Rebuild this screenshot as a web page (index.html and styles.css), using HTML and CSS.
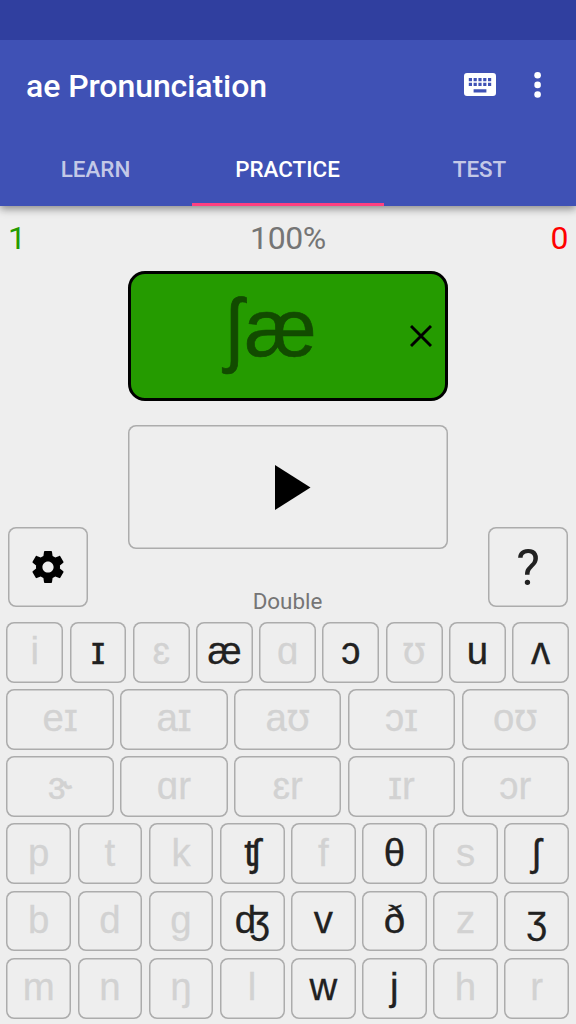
FILE: index.html
```html
<!DOCTYPE html>
<html lang="en">
<head>
<meta charset="utf-8">
<title>ae Pronunciation</title>
<link rel="stylesheet" href="styles.css">
</head>
<body>
<div class="app">
  <header class="header">
    <div class="status-bar"></div>
    <div class="toolbar">
      <h1 class="title">ae Pronunciation</h1>
      <svg class="icon-keyboard" viewBox="0 0 32 23"><path fill="#fff" fill-rule="evenodd" d="M3 0H29Q32 0 32 3V20Q32 23 29 23H3Q0 23 0 20V3Q0 0 3 0ZM4.8 5V8.2H8V5ZM9.6 5V8.2H12.8V5ZM14.4 5V8.2H17.6V5ZM19.2 5V8.2H22.4V5ZM24 5V8.2H27.2V5ZM4.8 9.8V13H8V9.8ZM9.6 9.8V13H12.8V9.8ZM14.4 9.8V13H17.6V9.8ZM19.2 9.8V13H22.4V9.8ZM24 9.8V13H27.2V9.8ZM9.6 16.2V19.4H22.4V16.2Z"/></svg>
      <svg class="icon-more" viewBox="0 0 8 26"><g fill="#fff"><circle cx="3.6" cy="3.3" r="3.3"/><circle cx="3.6" cy="12.9" r="3.3"/><circle cx="3.6" cy="22.5" r="3.3"/></g></svg>
    </div>
    <nav class="tabs">
      <div class="tab">LEARN</div>
      <div class="tab tab-active">PRACTICE</div>
      <div class="tab">TEST</div>
    </nav>
  </header>
  <main class="main">
    <div class="score"><span class="right-count">1</span><span>100%</span><span class="wrong-count">0</span></div>
    <div class="answer">
      <span class="answer-text"><span class="esh">ʃ</span>æ</span>
      <svg class="icon-clear" viewBox="0 0 22 22"><path d="M1 1L21 21M21 1L1 21" stroke="#000" stroke-width="2.9"/></svg>
    </div>
    <div class="controls">
      <div class="box square"><svg class="icon-gear" viewBox="2 2 20 20"><path d="M19.43 12.98c.04-.32.07-.64.07-.98s-.03-.66-.07-.98l2.11-1.65c.19-.15.24-.42.12-.64l-2-3.46c-.12-.22-.39-.3-.61-.22l-2.49 1c-.52-.4-1.08-.73-1.69-.98l-.38-2.65C14.46 2.18 14.25 2 14 2h-4c-.25 0-.46.18-.49.42l-.38 2.65c-.61.25-1.17.59-1.69.98l-2.49-1c-.23-.09-.49 0-.61.22l-2 3.46c-.13.22-.07.49.12.64l2.11 1.65c-.04.32-.07.65-.07.98s.03.66.07.98l-2.11 1.65c-.19.15-.24.42-.12.64l2 3.46c.12.22.39.3.61.22l2.49-1c.52.4 1.08.73 1.69.98l.38 2.65c.03.24.24.42.49.42h4c.25 0 .46-.18.49-.42l.38-2.65c.61-.25 1.17-.59 1.69-.98l2.49 1c.23.09.49 0 .61-.22l2-3.46c.12-.22.07-.49-.12-.64l-2.11-1.65zM12 15.5c-1.93 0-3.5-1.57-3.5-3.5s1.57-3.5 3.5-3.5 3.5 1.57 3.5 3.5-1.57 3.5-3.5 3.5z"/></svg></div>
      <div class="center">
        <div class="box play"><svg class="icon-play" viewBox="0 0 36 45"><path d="M0 0L35.5 22.5L0 45Z"/></svg></div>
        <div class="mode">Double</div>
      </div>
      <div class="box square help">?</div>
    </div>
    <div class="keyboard">
      <div class="row"><div class="box key off">i</div><div class="box key">ɪ</div><div class="box key off">ɛ</div><div class="box key">æ</div><div class="box key off">ɑ</div><div class="box key">ɔ</div><div class="box key off"><span class="alt">ʊ</span></div><div class="box key">u</div><div class="box key">ʌ</div></div>
      <div class="row"><div class="box key off">eɪ</div><div class="box key off">aɪ</div><div class="box key off">a<span class="alt">ʊ</span></div><div class="box key off">ɔɪ</div><div class="box key off">o<span class="alt">ʊ</span></div></div>
      <div class="row"><div class="box key off">ɝ</div><div class="box key off">ɑr</div><div class="box key off">ɛr</div><div class="box key off">ɪr</div><div class="box key off">ɔr</div></div>
      <div class="row"><div class="box key off">p</div><div class="box key off">t</div><div class="box key off">k</div><div class="box key">ʧ</div><div class="box key off">f</div><div class="box key">θ</div><div class="box key off">s</div><div class="box key">ʃ</div></div>
      <div class="row"><div class="box key off">b</div><div class="box key off">d</div><div class="box key off">g</div><div class="box key">ʤ</div><div class="box key">v</div><div class="box key">ð</div><div class="box key off">z</div><div class="box key">ʒ</div></div>
      <div class="row"><div class="box key off">m</div><div class="box key off">n</div><div class="box key off">ŋ</div><div class="box key off">l</div><div class="box key">w</div><div class="box key">j</div><div class="box key off">h</div><div class="box key off">r</div></div>
    </div>
  </main>
</div>
</body>
</html>
```

FILE: styles.css
```css
* { box-sizing: border-box; }
body { margin: 0; background: #eee; font-family: Roboto, sans-serif; }
svg { display: block; }
.app { width: 576px; height: 1024px; overflow: hidden; }
.header { height: 206px; background: #3f51b5; box-shadow: 0 3px 8px rgba(0,0,0,.42); }
.status-bar { height: 40px; background: #303f9f; }
.toolbar { height: 90px; padding: 0 34px 1px 26px; display: flex; align-items: center; }
.title { margin: 2px 0 0; flex: 1; color: #fff; font-size: 32px; font-weight: 500; letter-spacing: -.07px; white-space: nowrap; }
.icon-keyboard { width: 32px; height: 23px; margin-right: 38px; }
.icon-more { width: 8px; height: 26px; }
.tabs { height: 76px; display: grid; grid-template-columns: repeat(3, 1fr); }
.tab { display: flex; align-items: center; justify-content: center; padding: 5px 1px 0 0; border-bottom: 3px solid transparent; font-size: 22.4px; font-weight: 500; color: rgba(255,255,255,.7); }
.tab-active { color: #fff; border-bottom-color: #ff4081; }
.main { display: flex; flex-direction: column; }
.score { height: 65px; padding: 0 8px 2px; display: grid; grid-template-columns: 1fr 1fr 1fr; align-items: center; font-size: 32px; letter-spacing: -.4px; color: #757575; text-align: center; }
.right-count { color: #259b00; text-align: left; }
.wrong-count { color: #f00; text-align: right; }
.answer { width: 320px; height: 130px; margin: 0 auto; border: 3px solid #000; border-radius: 17px; background: #259b00; display: flex; align-items: center; padding-right: 13px; }
.answer-text { flex: 1; padding-bottom: 15px; text-align: center; font: 81px/109px "Liberation Sans", Arial, sans-serif; color: #124b00; -webkit-text-stroke: .7px #124b00; }
.esh { font-family: "Noto Sans", sans-serif; font-size: 77px; line-height: 0; }
.icon-clear { width: 22px; height: 22px; }
.controls { height: 207px; padding: 24px 8px 0; display: flex; justify-content: space-between; }
.box { background: #eee; border-radius: 8px; box-shadow: inset 0 0 0 1.5px #acacac; display: flex; align-items: center; justify-content: center; }
.square { width: 80px; height: 80px; margin-top: 102px; }
.icon-gear { width: 32px; height: 32px; }
.help { padding-top: 2px; font-size: 50px; color: #212121; }
.center { width: 320px; }
.play { height: 124px; }
.icon-play { width: 36px; height: 45px; margin-left: 10px; }
.mode { margin-top: 38px; padding-right: 1px; text-align: center; font-size: 22.4px; line-height: 28px; color: #757575; }
.keyboard { margin-top: 13.8px; padding: 0 7px 0 6.4px; display: flex; flex-direction: column; gap: 6.4px; }
.row { height: 60.8px; display: flex; gap: 6.4px; }
.key { flex: 1 1 0; min-width: 0; padding-bottom: 2px; font: 38.4px/58px "Liberation Sans", Arial, sans-serif; color: #212121; -webkit-text-stroke: .3px currentColor; }
.alt { margin-bottom: 5px; font-family: "Noto Sans", sans-serif; }
.off { color: #d2d2d2; }
```
